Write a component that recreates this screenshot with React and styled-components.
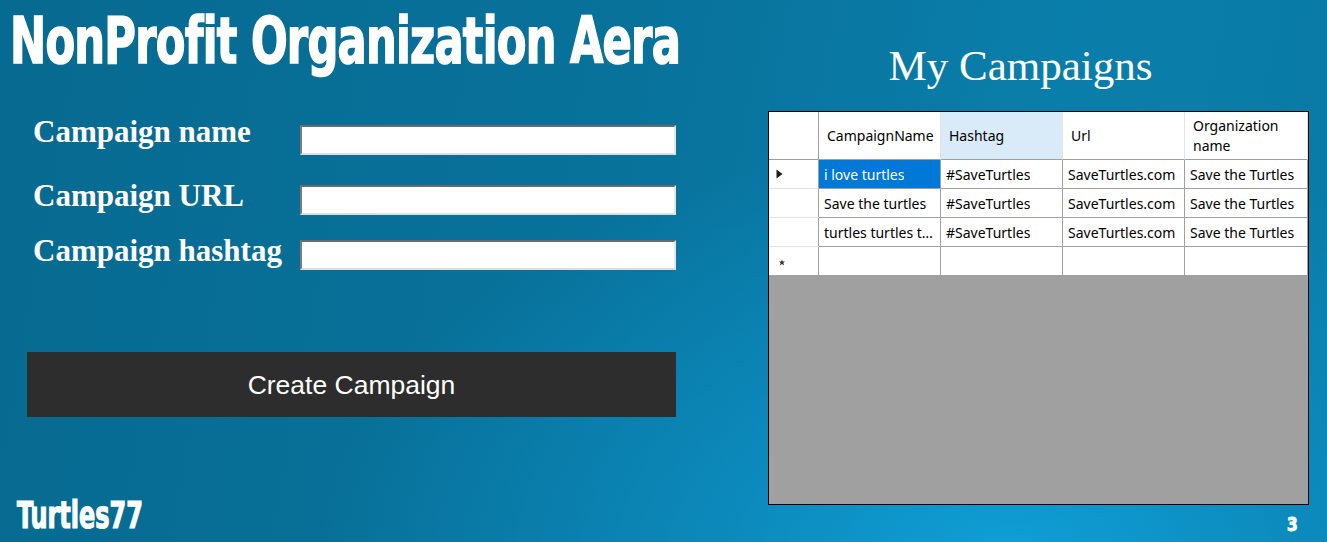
import React from "react";
import styled, { createGlobalStyle } from "styled-components";

const Global = createGlobalStyle`
  html, body { margin: 0; padding: 0; }
  body { width: 1327px; height: 542px; overflow: hidden; }
`;

const Page = styled.div`
  width: 1327px;
  height: 542px;
  display: grid;
  grid-template-columns: 740px 1fr;
  background:
    radial-gradient(ellipse 700px 420px at 1010px 560px, #0f9fd6 0%, rgba(14,150,205,0.6) 40%, rgba(10,120,165,0) 100%),
    linear-gradient(100deg, #076a90 0%, #08729b 45%, #0a7eaa 75%, #0a7aa6 100%);
  overflow: hidden;
`;

const Left = styled.div`
  display: flex;
  flex-direction: column;
  padding: 6px 0 0 10px;
`;

const Impact = styled.div`
  font-family: "Impact", "DejaVu Sans Condensed", "Liberation Sans", sans-serif;
  font-weight: 700;
  color: #fff;
  white-space: nowrap;
  display: inline-block;
  align-self: flex-start;
  transform-origin: left top;
  -webkit-text-stroke: ${(p) => p.$stroke || 1}px #fff;
`;

const Title = styled(Impact)`
  font-size: 64px;
  line-height: 70px;
  letter-spacing: -1px;
  transform: scaleX(0.75);
  -webkit-text-stroke: 1.6px #fff;
`;

const Form = styled.div`
  display: grid;
  grid-template-columns: 267px 376px;
  margin: 41px 0 0 23px;
  align-items: start;
`;

const Label = styled.div`
  font-family: "Liberation Serif", "Times New Roman", serif;
  font-weight: 700;
  font-size: 31px;
  color: #fff;
  line-height: 30px;
  height: ${(p) => p.$h}px;
  white-space: nowrap;
`;

const Field = styled.div`
  height: 30px;
  margin-top: ${(p) => p.$mt}px;
  box-sizing: border-box;
  background: #fff;
  border-top: 2px solid #6b6b6b;
  border-left: 2px solid #7a7a7a;
  border-bottom: 2px solid #dedede;
  border-right: 2px solid #e6e6e6;
`;

const Button = styled.div`
  margin: 82px 0 0 17px;
  width: 649px;
  height: 65px;
  background: #2d2d2d;
  color: #fff;
  font-family: "Liberation Sans", Arial, sans-serif;
  font-size: 26.5px;
  display: flex;
  align-items: center;
  justify-content: center;
  padding-top: 1px;
  box-sizing: border-box;
`;

const Footer = styled(Impact)`
  margin-top: auto;
  margin-left: 7px;
  margin-bottom: 6px;
  font-size: 37px;
  line-height: 40px;
  transform: scaleX(0.72);
  -webkit-text-stroke: 1.2px #fff;
`;

const Right = styled.div`
  display: flex;
  flex-direction: column;
  padding: 40px 0 0 28px;
`;

const Heading = styled.div`
  font-family: "Liberation Serif", "Times New Roman", serif;
  font-size: 43px;
  color: #fff;
  text-align: center;
  width: 505px;
  line-height: 52px;
`;

const GridBox = styled.div`
  margin-top: 19px;
  width: 541px;
  height: 394px;
  box-sizing: border-box;
  border: 1px solid #000;
  background: #a0a0a0;
  display: flex;
  flex-direction: column;
`;

const Table = styled.div`
  display: grid;
  grid-template-columns: 50px 122px 122px 122px 123px;
  grid-template-rows: 48px repeat(4, 29px);
  background: #fff;
  font-family: "Noto Sans", "Open Sans", sans-serif;
  font-size: 14px;
  color: #000;
`;

const HeadCell = styled.div`
  box-sizing: border-box;
  background: ${(p) => (p.$sel ? "#d9eaf9" : "#fff")};
  border-bottom: 1px solid #a0a0a0;
  border-right: 1px solid ${(p) => (p.$corner ? "#a0a0a0" : "#e4e4e4")};
  display: flex;
  align-items: center;
  padding: 0 6px 0 8px;
  line-height: 20px;
  color: #000;
`;

const RowHead = styled.div`
  box-sizing: border-box;
  background: #fff;
  border-right: 1px solid #a0a0a0;
  border-bottom: 1px solid ${(p) => (p.$last ? "#a0a0a0" : "#e3e3e3")};
  display: flex;
  align-items: center;
  padding-left: 7px;
`;

const Cell = styled.div`
  box-sizing: border-box;
  border-right: 1px solid #a0a0a0;
  border-bottom: 1px solid #a0a0a0;
  background: ${(p) => (p.$sel ? "#0078d7" : "#fff")};
  color: ${(p) => (p.$sel ? "#fff" : "#000")};
  padding: 0 2px 0 5px;
  display: flex;
  align-items: center;
  white-space: nowrap;
  overflow: hidden;
  min-width: 0;
`;

const CellText = styled.span`
  display: block;
  min-width: 0;
  overflow: hidden;
  text-overflow: ellipsis;
  white-space: nowrap;
`;

const PageNum = styled(Impact)`
  align-self: flex-end;
  margin: 7px 27px 0 0;
  font-size: 20px;
  line-height: 24px;
  transform: scaleX(0.85);
`;

const Arrow = () => (
  <svg width="7" height="10" viewBox="0 0 7 10">
    <path d="M0.5 0.5 L6.5 5 L0.5 9.5 Z" fill="#1e1e1e" />
  </svg>
);

const Star = () => (
  <svg width="8" height="8" viewBox="0 0 8 8" style={{ marginTop: 4, marginLeft: 2 }}>
    <path d="M4 0.5 L4.8 2.6 L7 2.5 L5.3 4 L6.2 6.5 L4 5.1 L1.8 6.5 L2.7 4 L1 2.5 L3.2 2.6 Z" fill="#333" />
  </svg>
);

const rows = [
  ["i love turtles", "#SaveTurtles", "SaveTurtles.com", "Save the Turtles"],
  ["Save the turtles", "#SaveTurtles", "SaveTurtles.com", "Save the Turtles"],
  ["turtles turtles turtles", "#SaveTurtles", "SaveTurtles.com", "Save the Turtles"],
];

export default function App() {
  return (
    <>
      <Global />
      <Page>
        <Left>
          <Title>NonProfit Organization Aera</Title>
          <Form>
            <Label $h={64}>Campaign name</Label>
            <Field $mt={8} />
            <Label $h={55}>Campaign URL</Label>
            <Field $mt={4} />
            <Label $h={34}>Campaign hashtag</Label>
            <Field $mt={4} />
          </Form>
          <Button>Create Campaign</Button>
          <Footer>Turtles77</Footer>
        </Left>
        <Right>
          <Heading>My Campaigns</Heading>
          <GridBox>
            <Table>
              <HeadCell $corner />
              <HeadCell>CampaignName</HeadCell>
              <HeadCell $sel>Hashtag</HeadCell>
              <HeadCell>Url</HeadCell>
              <HeadCell>Organization name</HeadCell>
              {rows.map((r, i) => (
                <React.Fragment key={i}>
                  <RowHead>{i === 0 ? <Arrow /> : null}</RowHead>
                  {r.map((c, j) => (
                    <Cell key={j} $sel={i === 0 && j === 0}>
                      <CellText>{c}</CellText>
                    </Cell>
                  ))}
                </React.Fragment>
              ))}
              <RowHead $last>
                <Star />
              </RowHead>
              <Cell />
              <Cell />
              <Cell />
              <Cell />
            </Table>
          </GridBox>
          <PageNum>3</PageNum>
        </Right>
      </Page>
    </>
  );
}
